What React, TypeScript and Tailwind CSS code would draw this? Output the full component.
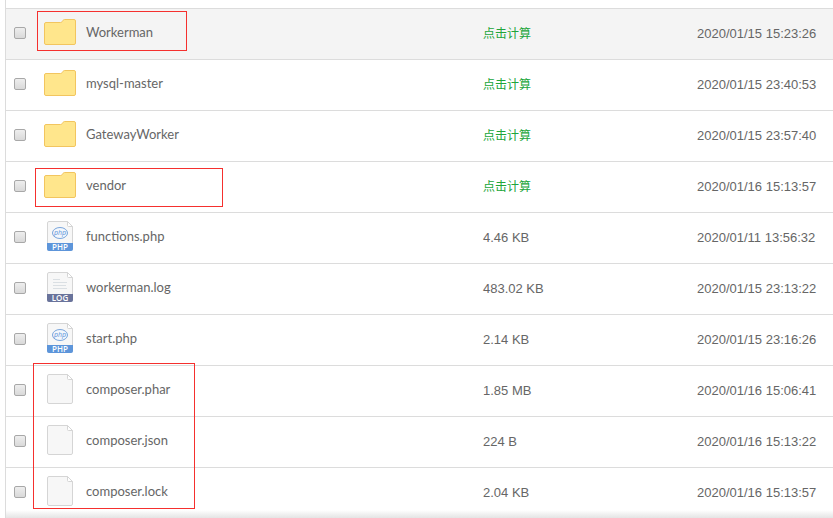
import clsx from 'clsx';

type FileKind = 'folder' | 'php' | 'log' | 'blank';

type FileItem = {
  name: string;
  kind: FileKind;
  size?: string;
  modified: string;
};

const files: FileItem[] = [
  { name: 'Workerman', kind: 'folder', modified: '2020/01/15 15:23:26' },
  { name: 'mysql-master', kind: 'folder', modified: '2020/01/15 23:40:53' },
  { name: 'GatewayWorker', kind: 'folder', modified: '2020/01/15 23:57:40' },
  { name: 'vendor', kind: 'folder', modified: '2020/01/16 15:13:57' },
  { name: 'functions.php', kind: 'php', size: '4.46 KB', modified: '2020/01/11 13:56:32' },
  { name: 'workerman.log', kind: 'log', size: '483.02 KB', modified: '2020/01/15 23:13:22' },
  { name: 'start.php', kind: 'php', size: '2.14 KB', modified: '2020/01/15 23:16:26' },
  { name: 'composer.phar', kind: 'blank', size: '1.85 MB', modified: '2020/01/16 15:06:41' },
  { name: 'composer.json', kind: 'blank', size: '224 B', modified: '2020/01/16 15:13:22' },
  { name: 'composer.lock', kind: 'blank', size: '2.04 KB', modified: '2020/01/16 15:13:57' },
];

const FolderIcon = () => (
  <svg width="32" height="30" viewBox="0 0 32 30" aria-hidden="true">
    <path
      d="M.5 7Q.5 5.500 2 5.500H16.500Q17.500 5.500 18 4.800L19.200 3.200Q19.700 2.500 20.500 2.500H30Q31.500 2.500 31.500 4V26Q31.500 27.500 30 27.500H2Q.5 27.500 .5 26Z"
      fill="#ffe68c"
      stroke="#f2c55f"
    />
  </svg>
);

const FileIcon = ({ kind }: { kind: FileKind }) => (
  <svg width="32" height="30" viewBox="0 0 32 30" aria-hidden="true">
    <path
      d="M5 .5H23.500L28.500 5.500V28Q28.500 29.500 27 29.500H5Q3.500 29.500 3.500 28V2Q3.500 .5 5 .5Z"
      fill="#f7f7f7"
      stroke="#d5d5d5"
    />
    <path d="M23.500 .5V4.500Q23.500 5.500 24.500 5.500H28.500Z" fill="#fff" stroke="#d5d5d5" />
    {kind === 'php' && (
      <>
        <ellipse cx="16" cy="12" rx="7.500" ry="5.500" fill="#f3f7fc" stroke="#79a5dc" />
        <text
          x="16"
          y="14"
          textAnchor="middle"
          fontSize="7"
          fontStyle="italic"
          fontFamily="Open Sans, sans-serif"
          fill="#5c93d8"
        >
          php
        </text>
      </>
    )}
    {kind === 'log' && (
      <path d="M9 7.500H16M9 10.500H23M9 13.500H22M9 16.500H23" stroke="#dadfe3" fill="none" />
    )}
    {(kind === 'php' || kind === 'log') && (
      <>
        <path
          d="M3 22H29V28Q29 30 27 30H5Q3 30 3 28Z"
          fill={kind === 'php' ? '#5d95da' : '#69739b'}
        />
        <text
          x="16"
          y="29"
          textAnchor="middle"
          fontSize="8"
          fontWeight="600"
          fontFamily="Open Sans, sans-serif"
          fill="#fff"
        >
          {kind === 'php' ? 'PHP' : 'LOG'}
        </text>
      </>
    )}
  </svg>
);

const FileRow = ({ file, active }: { file: FileItem; active: boolean }) => (
  <tr className={clsx('h-[51px] *:border-t *:border-[#dcdcdc]', active && 'bg-[#f4f4f4]')}>
    <td className="pb-0.5 pl-2">
      <input
        type="checkbox"
        aria-label={file.name}
        className="block size-3 appearance-none rounded-xs border border-[#a8a8a8] bg-linear-to-b from-[#eeeeee] to-[#d9d9d9]"
      />
    </td>
    <td className="pb-1">
      <a href="#" className="flex items-center gap-2.5 font-['Lato','Noto_Sans_CJK_SC',sans-serif]">
        {file.kind === 'folder' ? <FolderIcon /> : <FileIcon kind={file.kind} />}
        {file.name}
      </a>
    </td>
    <td>
      {file.size ?? (
        <button type="button" className="block text-xs leading-5 text-[#20a53a]">
          点击计算
        </button>
      )}
    </td>
    <td>{file.modified}</td>
  </tr>
);

export default function App() {
  return (
    <main className="relative overflow-hidden bg-white pl-[5px] font-['Liberation_Sans','Noto_Sans_CJK_SC',sans-serif] text-[13px] leading-5 text-[#666666]">
      <div className="border-l border-[#dcdcdc] pt-2">
        <table className="w-full table-fixed border-separate border-spacing-0">
          <colgroup>
            <col className="w-[38px]" />
            <col />
            <col className="w-[214px]" />
            <col className="w-[136px]" />
          </colgroup>
          <tbody>
            {files.map((file, index) => (
              <FileRow key={file.name} file={file} active={index === 0} />
            ))}
          </tbody>
        </table>
      </div>

      {/* red marks around the entries to pick */}
      <div className="pointer-events-none absolute left-[37px] top-[11px] h-10 w-[150px] border border-[#f5302e]" />
      <div className="pointer-events-none absolute left-[35px] top-[168px] h-[39px] w-[188px] border border-[#f5302e]" />
      <div className="pointer-events-none absolute left-[33px] top-[363px] h-[146px] w-[162px] border border-[#f5302e]" />

      <div className="pointer-events-none absolute bottom-0 left-1.5 right-0 h-2 bg-linear-to-b from-transparent to-[#e4e4e4]" />
    </main>
  );
}
